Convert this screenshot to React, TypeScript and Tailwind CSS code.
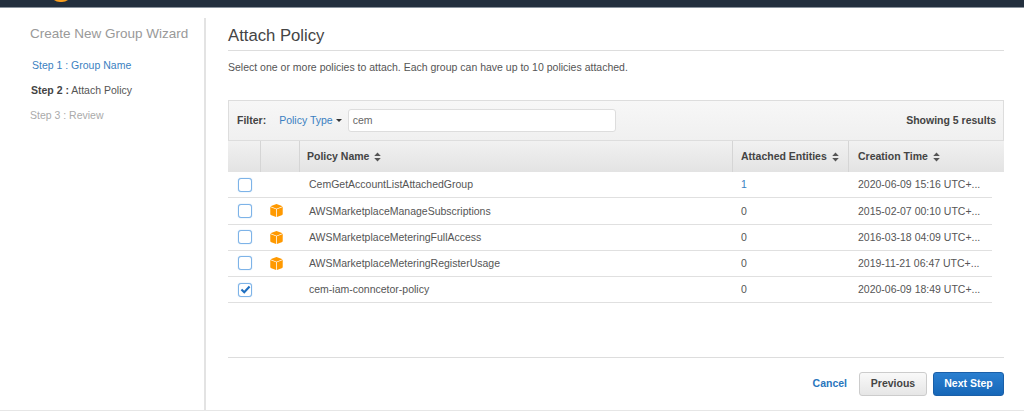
import React from "react";

const Sort = () => (
  <svg width="7" height="10" viewBox="0 0 7 10" className="inline-block ml-[5px] align-[-1px]">
    <path d="M3.5 0.5 L6.8 4 H0.2 Z M3.5 9.5 L6.8 6 H0.2 Z" fill="#555" />
  </svg>
);

const Cube = () => (
  <svg width="13" height="13" viewBox="0 0 14 14">
    <path d="M7 0 L13.6 2.5 L7 5 L0.4 2.5 Z" fill="#ff9900" />
    <path d="M0.3 3.2 L6.6 5.6 V14 L1.4 12.2 Q0.3 11.8 0.3 10.8 Z" fill="#ff9900" />
    <path d="M13.7 3.2 L7.4 5.6 V14 L12.6 12.2 Q13.7 11.8 13.7 10.8 Z" fill="#ff9900" />
  </svg>
);

const Check = ({ checked }: { checked?: boolean }) => (
  <div className="w-[14px] h-[14px] border border-[#7db3e8] rounded-[3px] bg-white flex items-center justify-center shadow-[0_0_1px_#7db3e8]">
    {checked && (
      <svg width="11" height="9" viewBox="0 0 12 10">
        <path d="M1.5 5 L4.6 8 L10.5 1.6" fill="none" stroke="#1f6fc0" strokeWidth="2.4" />
      </svg>
    )}
  </div>
);

const rows = [
  { name: "CemGetAccountListAttachedGroup", n: "1", time: "2020-06-09 15:16 UTC+...", link: true },
  { name: "AWSMarketplaceManageSubscriptions", n: "0", time: "2015-02-07 00:10 UTC+...", cube: true },
  { name: "AWSMarketplaceMeteringFullAccess", n: "0", time: "2016-03-18 04:09 UTC+...", cube: true },
  { name: "AWSMarketplaceMeteringRegisterUsage", n: "0", time: "2019-11-21 06:47 UTC+...", cube: true },
  { name: "cem-iam-conncetor-policy", n: "0", time: "2020-06-09 18:49 UTC+...", checked: true },
];

export default function App() {
  return (
    <div className="w-[1024px] h-[414px] bg-white overflow-hidden flex flex-col font-['Liberation_Sans',Arial,sans-serif] text-[#555]">
      <header className="h-[8px] shrink-0 bg-[#232f3e] border-b border-[#8a929c] relative overflow-hidden">
        <div className="absolute left-[50px] top-[-8px] w-[22px] h-[10px] rounded-b-full border-b-[2px] border-[#f79c1c]" />
      </header>
      <div className="h-[403px] shrink-0 flex border-b border-[#e6e6e6] pt-[10px]">
        <aside className="w-[206px] shrink-0 border-r-[2px] border-[#e3e3e3] pl-[30px] pt-[7px]">
          <h2 className="text-[13.5px] leading-[18px] text-[#999]">Create New Group Wizard</h2>
          <div className="mt-[16px] ml-[2px] text-[10.5px] leading-[13px] text-[#3a7fc1]">Step 1 : Group Name</div>
          <div className="mt-[12px] ml-[1px] text-[10.5px] leading-[13px] text-[#555]"><b className="text-[#444]">Step 2 :</b> Attach Policy</div>
          <div className="mt-[12px] text-[10.5px] leading-[13px] text-[#aaa]">Step 3 : Review</div>
        </aside>
        <main className="w-[776px] ml-[22px] flex flex-col">
          <h1 className="text-[16.7px] leading-[20px] pt-[8px] text-[#444] h-[33px] shrink-0 border-b border-[#ddd]">Attach Policy</h1>
          <p className="mt-[10px] text-[10.5px] leading-[13px] text-[#555]">Select one or more policies to attach. Each group can have up to 10 policies attached.</p>
          <div className="mt-[26px] h-[41px] shrink-0 flex items-center border border-[#ddd] bg-gradient-to-b from-[#f7f7f7] to-[#f0f0f0] pl-[8px] pr-[7px] text-[10.5px]">
            <b className="text-[#444]">Filter:</b>
            <span className="ml-[13px] text-[#3a7fc1]">Policy Type</span>
            <span className="ml-[3px] w-0 h-0 border-x-[3px] border-x-transparent border-t-[3px] border-t-[#333]" />
            <div className="ml-[6px] w-[268px] h-[23px] bg-white border border-[#ddd] rounded-[3px] flex items-center pl-[4px] text-[#666]">cem</div>
            <b className="ml-auto text-[#444]">Showing 5 results</b>
          </div>
          <div className="h-[31px] shrink-0 flex bg-gradient-to-b from-[#f1f1f1] to-[#e3e3e3] text-[10.5px] font-bold text-[#444]">
            <div className="w-[33px] border-r border-[#d5d5d5]" />
            <div className="w-[39px] border-r border-[#d5d5d5]" />
            <div className="w-[433px] border-r border-[#d5d5d5] flex items-center pl-[7px]"><span>Policy Name</span><Sort /></div>
            <div className="w-[116px] border-r border-[#d5d5d5] flex items-center pl-[8px]"><span>Attached Entities</span><Sort /></div>
            <div className="flex-1 flex items-center pl-[9px]"><span>Creation Time</span><Sort /></div>
          </div>
          <div className="w-[764px]">
            {rows.map((r) => (
              <div key={r.name} className="h-[26.25px] flex items-center border-b border-[#e0e0e0] text-[10.5px] text-[#555]">
                <div className="w-[32px] pl-[10px]"><Check checked={r.checked} /></div>
                <div className="w-[38px] pl-[10px] flex">{r.cube && <Cube />}</div>
                <div className="w-[434px] pl-[11px] pt-[1px]">{r.name}</div>
                <div className="w-[117px] pl-[9px] pt-[1px]"><span className={r.link ? "text-[#3a7fc1]" : ""}>{r.n}</span></div>
                <div className="flex-1 pl-[9px] pt-[1px] whitespace-nowrap">{r.time}</div>
              </div>
            ))}
          </div>
          <div className="mt-auto border-t border-[#ddd] h-[53px] shrink-0 flex items-center justify-end text-[10.5px] font-bold">
            <span className="text-[#2a76bd] mr-[12px]">Cancel</span>
            <button className="w-[68px] h-[24px] rounded-[3px] border border-[#ccc] bg-gradient-to-b from-[#f9f9f9] to-[#e6e6e6] text-[#444] mr-[6px]">Previous</button>
            <button className="w-[71px] h-[24px] rounded-[3px] border border-[#1a5fa8] bg-gradient-to-b from-[#2a7fd0] to-[#1667b8] text-white">Next Step</button>
          </div>
        </main>
      </div>
    </div>
  );
}
